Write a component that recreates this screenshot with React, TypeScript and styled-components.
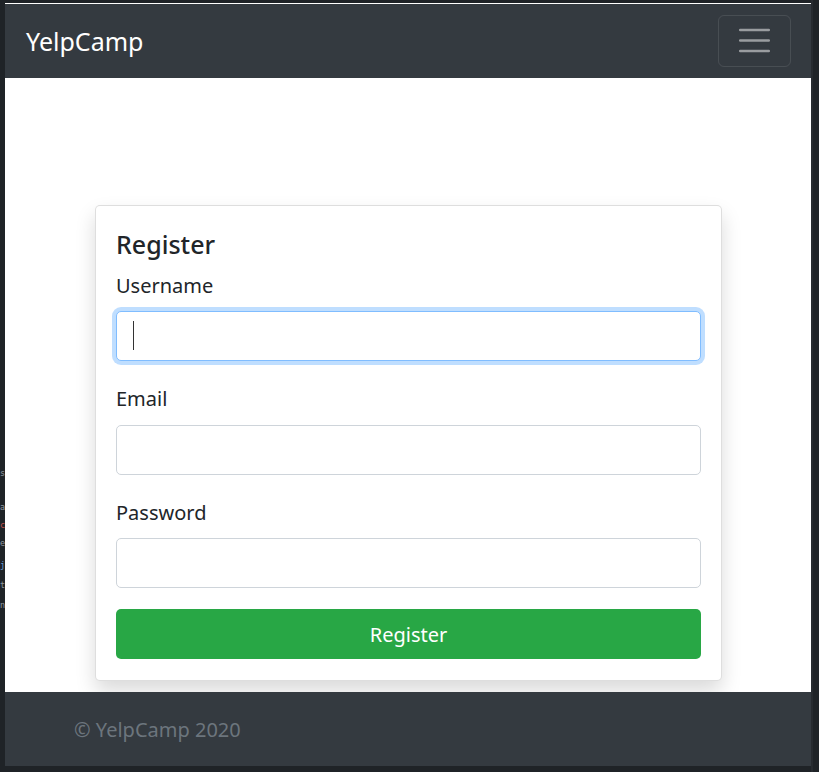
import React from "react";
import styled, { createGlobalStyle } from "styled-components";

const Global = createGlobalStyle`
  html, body { margin: 0; padding: 0; background: #1f2327; }
  body { font-family: "Noto Sans", "Segoe UI", sans-serif; }
  * { box-sizing: border-box; }
`;

const Frame = styled.div`
  width: 819px;
  height: 772px;
  display: flex;
  background: #1f2327;
  overflow: hidden;
`;

const LeftGutter = styled.div`
  width: 5px;
  flex: none;
  overflow: hidden;
  padding-top: 467px;
  display: flex;
  flex-direction: column;
`;

const GutterLine = styled.span<{ $color?: string; $gap?: number }>`
  display: block;
  height: ${(p) => p.$gap ?? 18}px;
  font: 8.5px/13px "DejaVu Sans Mono", monospace;
  color: ${(p) => p.$color ?? "#8d969e"};
  white-space: nowrap;
`;

const PageColumn = styled.div`
  width: 806px;
  flex: none;
  padding: 3px 0 6px;
  display: flex;
  flex-direction: column;
`;

const Page = styled.div`
  flex: 1;
  display: flex;
  flex-direction: column;
  border-top: 1px solid #ffffff;
`;

const RightGutter = styled.div`
  flex: 1;
  border-left: 2px solid #272b30;
`;

const Navbar = styled.nav`
  height: 74px;
  flex: none;
  background: #343a40;
  display: flex;
  align-items: center;
  justify-content: space-between;
  padding: 0 20px 0 21px;
`;

const Brand = styled.a`
  color: #ffffff;
  font-size: 25px;
  line-height: 1;
  text-decoration: none;
  margin-top: 1px;
`;

const Toggler = styled.button`
  width: 73px;
  height: 52px;
  margin-top: -1px;
  background: transparent;
  border: 1px solid rgba(255, 255, 255, 0.1);
  border-radius: 6px;
  display: flex;
  align-items: center;
  justify-content: center;
  padding: 0;
`;

const Main = styled.main`
  flex: 1;
  background: #ffffff;
  display: flex;
  align-items: flex-start;
  padding: 127px 89px 0 90px;
`;

const Card = styled.div`
  flex: 1;
  border: 1px solid rgba(0, 0, 0, 0.13);
  border-radius: 5px;
  background: #ffffff;
  box-shadow: 0 10px 20px rgba(0, 0, 0, 0.15);
  padding: 23px 20px 21px;
`;

const Title = styled.h5`
  margin: 0 0 12px;
  font-size: 25px;
  line-height: 30px;
  font-weight: 500;
  color: #212529;
`;

const Group = styled.div<{ $gap?: number }>`
  margin-bottom: ${(p) => p.$gap ?? 23}px;
`;

const Label = styled.label<{ $gap?: number }>`
  display: block;
  font-size: 20px;
  line-height: 30px;
  color: #212529;
  margin-bottom: ${(p) => p.$gap ?? 11}px;
`;

const InputWrap = styled.div`
  position: relative;
`;

const Input = styled.input<{ $focused?: boolean }>`
  display: block;
  width: 100%;
  height: 50px;
  font: 20px "Noto Sans", sans-serif;
  color: #495057;
  padding: 0 15px;
  border: 1px solid ${(p) => (p.$focused ? "#80bdff" : "#ced4da")};
  border-radius: 5px;
  outline: none;
  background: #ffffff;
  box-shadow: ${(p) => (p.$focused ? "0 0 0 4px rgba(0, 123, 255, 0.25)" : "none")};
`;

const Caret = styled.span`
  position: absolute;
  left: 17px;
  top: 10px;
  width: 1px;
  height: 29px;
  background: #333333;
`;

const SubmitButton = styled.button`
  display: block;
  width: 100%;
  height: 50px;
  border: none;
  border-radius: 5px;
  background: #28a745;
  color: #ffffff;
  font: 20px "Noto Sans", sans-serif;
  padding: 0;
`;

const Footer = styled.footer`
  height: 74px;
  flex: none;
  background: #343a40;
  display: flex;
  align-items: center;
  padding-left: 69px;
  color: #6c757d;
  font-size: 20px;
`;

const MenuIcon = () => (
  <svg width="39" height="39" viewBox="0 0 30 30" aria-hidden="true">
    <path
      d="M4 7h22M4 15h22M4 23h22"
      stroke="rgba(255,255,255,0.5)"
      strokeWidth="1.9"
      strokeLinecap="round"
      fill="none"
    />
  </svg>
);

export default function App() {
  return (
    <>
      <Global />
      <Frame>
        <LeftGutter>
          <GutterLine $gap={34}>s</GutterLine>
          <GutterLine>a</GutterLine>
          <GutterLine $color="#c0504d">c</GutterLine>
          <GutterLine $gap={22}>e</GutterLine>
          <GutterLine $color="#6a9fd8" $gap={20}>j</GutterLine>
          <GutterLine $gap={20}>t</GutterLine>
          <GutterLine>n</GutterLine>
        </LeftGutter>
        <PageColumn>
          <Page>
            <Navbar>
              <Brand href="#">YelpCamp</Brand>
              <Toggler aria-label="Toggle navigation">
                <MenuIcon />
              </Toggler>
            </Navbar>
            <Main>
              <Card>
                <Title>Register</Title>
                <Group>
                  <Label htmlFor="username" $gap={10}>Username</Label>
                  <InputWrap>
                    <Input id="username" type="text" $focused readOnly />
                    <Caret />
                  </InputWrap>
                </Group>
                <Group>
                  <Label htmlFor="email">Email</Label>
                  <Input id="email" type="email" readOnly />
                </Group>
                <Group $gap={21}>
                  <Label htmlFor="password" $gap={10}>Password</Label>
                  <Input id="password" type="password" readOnly />
                </Group>
                <SubmitButton type="button">Register</SubmitButton>
              </Card>
            </Main>
            <Footer>© YelpCamp 2020</Footer>
          </Page>
        </PageColumn>
        <RightGutter />
      </Frame>
    </>
  );
}
